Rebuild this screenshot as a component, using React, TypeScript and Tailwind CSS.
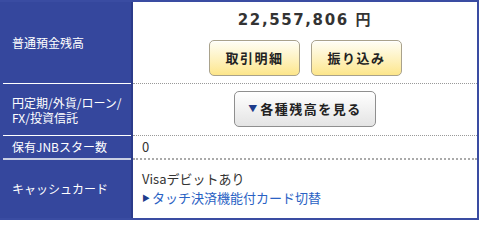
import React from "react";

export default function App() {
  const jp = { fontFamily: '"Noto Sans CJK JP", "Noto Sans", sans-serif' };
  return (
    <div className="w-[480px] h-[220px] bg-white" style={jp}>
      <div className="w-[479px] border-t-2 border-b-2 border-r-2 border-[#3a4ca2] bg-white">
        {/* Row 1 */}
        <div className="flex h-[82px]">
          <div className="w-[133px] shrink-0 bg-[#35479d] border-r-2 border-[#2b3b8a] flex flex-col">
            <div className="flex-1 flex items-center pl-[12px] text-white text-[12px]">普通預金残高</div>
            <div className="h-px ml-[3px] bg-white" />
          </div>
          <div className="flex-1 flex flex-col border-b border-dotted border-[#999]">
            <div
              className="pt-[8px] text-center text-[15px] font-bold tracking-[1.6px] text-[#333] leading-[20px]"
              style={{ fontFamily: '"DejaVu Sans", "Noto Sans CJK JP", sans-serif' }}
            >
              22,557,806 円
            </div>
            <div className="flex justify-center gap-[11px] mt-[10px] pl-[1px]">
              <button className="w-[91px] h-[36px] rounded-[5px] border border-[#a9a28c] bg-gradient-to-b from-[#fffef6] to-[#fde68a] text-[13px] font-bold tracking-[1.5px] text-[#222] shadow-[inset_0_1px_0_#fff]">
                取引明細
              </button>
              <button className="w-[91px] h-[36px] rounded-[5px] border border-[#a9a28c] bg-gradient-to-b from-[#fffef6] to-[#fde68a] text-[13px] font-bold tracking-[1.5px] text-[#222] shadow-[inset_0_1px_0_#fff]">
                振り込み
              </button>
            </div>
          </div>
        </div>
        {/* Row 2 */}
        <div className="flex h-[52px]">
          <div className="w-[133px] shrink-0 bg-[#35479d] border-r-2 border-[#2b3b8a] flex flex-col">
            <div className="flex-1 flex items-center pl-[12px] text-white text-[12px] leading-[15px]">
              円定期/外貨/ローン/
              <br />
              FX/投資信託
            </div>
            <div className="h-px ml-[3px] bg-white" />
          </div>
          <div className="flex-1 flex items-center justify-center border-b border-dotted border-[#999]">
            <button className="w-[142px] h-[36px] mt-[-1px] rounded-[5px] border border-[#8f8f8f] bg-gradient-to-b from-white to-[#e4e4e4] text-[13px] font-bold tracking-[1.5px] text-[#222] flex items-center justify-center gap-[3px]">
              <span className="text-[9px] text-[#1e3c8c] tracking-normal">▼</span>
              <span>各種残高を見る</span>
            </button>
          </div>
        </div>
        {/* Row 3 */}
        <div className="flex h-[24px]">
          <div className="w-[133px] shrink-0 bg-[#35479d] border-r-2 border-[#2b3b8a] flex flex-col">
            <div className="flex-1 flex items-center pl-[12px] text-white text-[12px]">保有JNBスター数</div>
            <div className="h-[2px] ml-[3px] bg-[#c9cfe3]" />
          </div>
          <div className="flex-1 flex items-center pl-[9px] border-b-2 border-dotted border-[#aaa] text-[13px] text-[#333]">
            0
          </div>
        </div>
        {/* Row 4 */}
        <div className="flex h-[58px]">
          <div className="w-[133px] shrink-0 bg-[#35479d] border-r-2 border-[#2b3b8a] flex items-center pl-[12px] text-white text-[12px]">
            キャッシュカード
          </div>
          <div className="flex-1 flex flex-col justify-center pl-[9px] text-[13px] leading-[19px] pb-[2px]">
            <div className="text-[#333]">Visaデビットあり</div>
            <div className="flex items-center text-[#2a62c4]">
              <span className="text-[8px] text-[#1e3c8c] w-[10px]">▶</span>
              <span>タッチ決済機能付カード切替</span>
            </div>
          </div>
        </div>
      </div>
    </div>
  );
}
